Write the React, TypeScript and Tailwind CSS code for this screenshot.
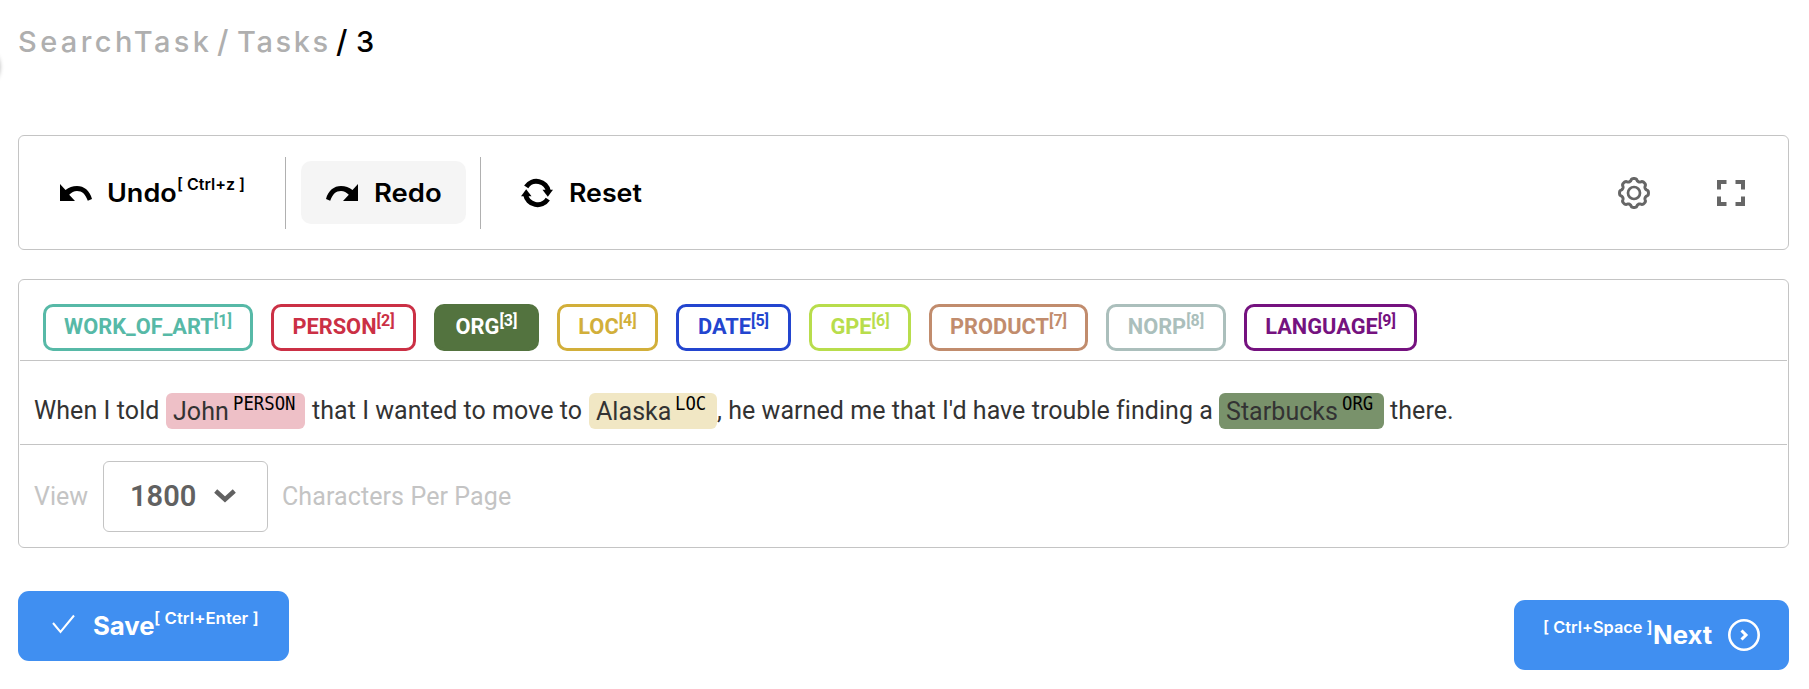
import React from "react";

const labels = [
  { name: "WORK_OF_ART", key: 1, cls: "w-[210px] border-[#57b9a7] text-[#57b9a7]" },
  { name: "PERSON", key: 2, cls: "w-[145px] border-[#cb3045] text-[#cb3045]" },
  { name: "ORG", key: 3, cls: "w-[105px] border-[#53733f] bg-[#53733f] text-white" },
  { name: "LOC", key: 4, cls: "w-[101px] border-[#d2af3a] text-[#d2af3a]" },
  { name: "DATE", key: 5, cls: "w-[115px] border-[#2345cf] text-[#2345cf]" },
  { name: "GPE", key: 6, cls: "w-[102px] border-[#b8dd4c] text-[#b8dd4c]" },
  { name: "PRODUCT", key: 7, cls: "w-[159px] border-[#c18c6d] text-[#c18c6d]" },
  { name: "NORP", key: 8, cls: "w-[120px] border-[#abbfbc] text-[#abbfbc]" },
  { name: "LANGUAGE", key: 9, cls: "w-[173px] border-[#75127f] text-[#75127f]" },
];

function UndoIcon({ className = "" }: { className?: string }) {
  return (
    <svg viewBox="0 0 32 17" className={`h-[17px] w-8 shrink-0 ${className}`} fill="currentColor">
      <path d="M0 0V17H15L9.200 10.800C11.500 8.300 14 7 17 7C22 7 25.500 10 27.800 16.800L32 15C29.800 6.600 24 2 17 2C12.500 2 9 3.300 5.500 6Z" />
    </svg>
  );
}

function ResetIcon() {
  return (
    <svg viewBox="0 0 32 30" className="h-[30px] w-8 shrink-0" fill="none" stroke="currentColor" strokeWidth="5">
      <path d="M5.200 8.800A12.200 12.200 0 0 1 27.400 13.500" />
      <path d="M26.800 21.200A12.200 12.200 0 0 1 4.600 16.500" />
      <path d="M21.500 11.800H32l-5.200 6.900z" fill="currentColor" stroke="none" />
      <path d="M10.500 18.200H0l5.200-6.900z" fill="currentColor" stroke="none" />
    </svg>
  );
}

function gearPath() {
  const pts: string[] = [];
  for (let i = 0; i <= 160; i++) {
    const a = (i / 160) * Math.PI * 2;
    const r = 13.2 + 1.3 * Math.tanh(1.6 * Math.cos(a * 8) + 0.4);
    pts.push(`${(16 + r * Math.sin(a)).toFixed(2)} ${(16 - r * Math.cos(a)).toFixed(2)}`);
  }
  return `M${pts.join("L")}Z`;
}

function Entity({ text, label, cls }: { text: string; label: string; cls: string }) {
  return (
    <span className={`flex h-9 shrink-0 rounded-md pl-[7px] pt-[3px] leading-8 ${cls}`}>
      <span className="tracking-[0.05px]">{text}</span>
      <span className="ml-1 origin-left scale-x-[0.91] font-['DejaVu_Sans_Mono',monospace] text-[19px] leading-[15px] text-black">{label}</span>
    </span>
  );
}

export default function App() {
  return (
    <div className="relative h-[689px] w-full overflow-hidden bg-white pr-5 pl-[18px] font-[Inter,sans-serif] text-black">
      <div className="absolute -left-[41px] top-[46px] size-10 rounded-full bg-white shadow-[0_1px_5px_rgba(0,0,0,0.45)]" />
      <nav className="flex h-[135px] items-start pt-[24px] text-[29px] leading-9 font-medium text-[#afafaf]">
        <span className="w-[199px] tracking-[3.4px]">SearchTask</span>
        <span className="w-5 text-[31px]">/</span>
        <span className="w-[99px] tracking-[2.6px]">Tasks</span>
        <span className="w-5 text-[31px] text-black">/</span>
        <span className="text-black">3</span>
      </nav>

      <section className="flex h-[115px] items-center rounded-md border border-[#c4c4c4] pr-[43px]">
        <div className="flex h-[72px] w-[267px] items-center border-r border-[#b0b0b0] pl-[41px]">
          <UndoIcon />
          <span className="ml-[15px] w-[70px] origin-left scale-x-[1.08] pt-0.5 text-[25px] font-semibold">Undo</span>
          <span className="mb-[17px] text-[16px] leading-5 font-semibold whitespace-nowrap">[ Ctrl+z ]</span>
        </div>
        <div className="flex h-[72px] w-[195px] items-center border-r border-[#b0b0b0] pl-[15px]">
          <button className="flex h-[63px] w-[165px] items-center rounded-[10px] bg-[#f5f5f5] pl-[25px]">
            <UndoIcon className="-scale-x-100" />
            <span className="ml-4 origin-left scale-x-[1.1] pt-0.5 text-[25px] font-semibold">Redo</span>
          </button>
        </div>
        <div className="flex items-center pl-10">
          <ResetIcon />
          <span className="ml-4 origin-left scale-x-[1.07] pt-0.5 text-[25px] font-semibold">Reset</span>
        </div>
        <div className="ml-auto flex items-center gap-[67px] text-[#666]">
          <svg viewBox="0 0 32 32" className="size-8" fill="none" stroke="currentColor" strokeWidth="3">
            <path d={gearPath()} strokeLinejoin="round" />
            <circle cx="16" cy="16" r="6" strokeWidth="2.700" />
          </svg>
          <svg viewBox="0 0 28 26" className="h-[26px] w-7" fill="none" stroke="currentColor" strokeWidth="4">
            <path d="M2 9.500V2h7.500M18.500 2H26v7.500M26 16.500V24h-7.500M9.500 24H2v-7.500" />
          </svg>
        </div>
      </section>

      <section className="mt-[29px] h-[269px] rounded-md border border-[#c4c4c4] px-px font-[Roboto,sans-serif]">
        <div className="flex h-[81px] gap-[18px] border-b border-[#c4c4c4] pl-[23px] pt-6">
          {labels.map((l) => (
            <button key={l.key} className={`flex h-[47px] shrink-0 justify-center rounded-[10px] border-[3px] pt-[5px] text-[21.8px] leading-[30px] font-bold ${l.cls}`}>
              <span>{l.name}</span>
              <span className="-mt-[6px] text-[16px]">[{l.key}]</span>
            </button>
          ))}
        </div>
        <div className="flex h-[84px] border-b border-[#c4c4c4] pl-[14px] pt-8 text-[25px] leading-9 whitespace-pre text-[#333]">
          <span className="w-[132px] tracking-[0.08px]">When I told</span>
          <Entity text="John" label="PERSON" cls="w-[139px] bg-[#eec0c7]" />
          <span className="w-[284px] pl-[7px] tracking-[0.05px]">that I wanted to move to</span>
          <Entity text="Alaska" label="LOC" cls="w-[128px] bg-[#f1e7c4]" />
          <span className="w-[502px] tracking-[0.05px]">, he warned me that I'd have trouble finding a</span>
          <Entity text="Starbucks" label="ORG" cls="w-[165px] bg-[#79926b]" />
          <span className="pl-[6px] tracking-[0.08px]">there.</span>
        </div>
        <div className="flex h-[102px] items-center pl-[14px] text-[25px] text-[#c4c4c4]">
          <span className="w-[69px] pt-0.5">View</span>
          <button className="flex h-[71px] w-[165px] items-center rounded-md border border-[#c4c4c4] pl-[26px] text-[29px] font-semibold text-[#616161]">
            <span className="pt-0.5">1800</span>
            <svg viewBox="0 0 22 14" className="ml-[18px] h-[14px] w-[22px]" fill="none" stroke="currentColor" strokeWidth="4.500">
              <path d="M1.700 2 11 10.500 20.300 2" />
            </svg>
          </button>
          <span className="pl-[14px] pt-0.5 tracking-[0.1px]">Characters Per Page</span>
        </div>
      </section>

      <footer className="flex justify-between pt-[43px] text-white">
        <button className="flex h-[70px] w-[271px] items-center rounded-[11px] bg-[#408ff1] pl-[34px] text-left">
          <svg viewBox="0 0 23 20" className="mb-1 h-5 w-[23px]" fill="none" stroke="currentColor" strokeWidth="2">
            <path d="M1 9l7.500 9L22 1.500" />
          </svg>
          <span className="ml-[18px] w-[61px] origin-left scale-x-[1.03] pt-0.5 text-[25px] font-bold">Save</span>
          <span className="mb-[17px] origin-left scale-x-[1.05] text-[16px] font-semibold whitespace-nowrap">[ Ctrl+Enter ]</span>
        </button>
        <button className="mt-[9px] flex h-[70px] w-[275px] items-center rounded-[11px] bg-[#408ff1] pl-[29px] text-left">
          <span className="mb-[17px] w-[110px] origin-left scale-x-[1.02] text-[16px] font-semibold whitespace-nowrap">[ Ctrl+Space ]</span>
          <span className="w-[75px] origin-left scale-x-[1.03] pt-0.5 text-[25px] font-bold">Next</span>
          <svg viewBox="0 0 32 32" className="size-8" fill="none" stroke="currentColor" strokeWidth="2.6">
            <circle cx="16" cy="16" r="14.700" />
            <path d="M13.500 11.500 18 16l-4.500 4.500" strokeWidth="3" />
          </svg>
        </button>
      </footer>
    </div>
  );
}
